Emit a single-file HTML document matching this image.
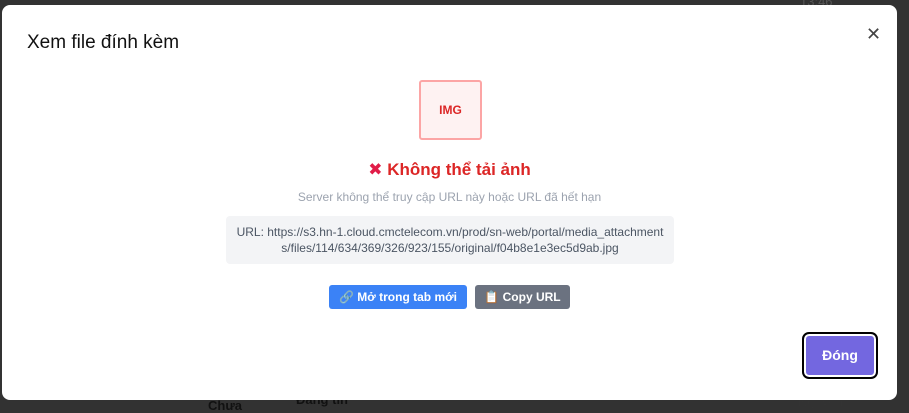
<!DOCTYPE html>
<html><head><meta charset="utf-8"><style>
html,body{margin:0;padding:0;width:909px;height:410px;overflow:hidden;background:#323232;font-family:"Liberation Sans","DejaVu Sans",sans-serif;}
.bgtxt{position:absolute;color:#111;font-size:13px;}
.modal{position:absolute;left:2px;top:5px;width:895px;height:395px;background:#fff;border-radius:8px;}
.title{position:absolute;left:25px;top:27px;font-size:19px;color:#111;}
.close{position:absolute;left:864px;top:19px;font-size:18px;color:#444;font-weight:200;}
.img{position:absolute;left:417px;top:75px;width:59px;height:56px;border:2px solid #fca5a5;background:#fef2f2;border-radius:3px;color:#dc2626;font-size:12px;font-weight:bold;text-align:center;line-height:56px;}
.err{position:absolute;left:0;width:895px;top:155px;text-align:center;color:#dc2626;font-size:17px;font-weight:bold;}
.err span{color:#e11d48;}
.sub{position:absolute;left:0;width:895px;top:185px;text-align:center;color:#9ca3af;font-size:12px;}
.url{position:absolute;left:224px;top:211px;width:448px;height:48px;background:#f3f4f6;border-radius:4px;color:#4b5563;font-size:12px;line-height:16px;text-align:center;padding-top:8px;box-sizing:border-box;}
.btn{position:absolute;top:280px;height:24px;line-height:24px;color:#fff;font-size:12px;font-weight:bold;border-radius:3px;text-align:center;}
.b1{left:327px;width:138px;background:#3b82f6;}
.b2{left:473px;width:95px;background:#6b7280;}
.dong{position:absolute;left:800px;top:327px;width:76px;height:47px;box-sizing:border-box;border:2px solid #000;border-radius:7px;background:#7367e0;box-shadow:inset 0 0 0 2px #fff;color:#fff;font-weight:bold;font-size:14px;text-align:center;line-height:43px;}
</style></head><body>
<div class="bgtxt" style="left:800px;top:-6px;color:#555">13:46</div>
<div class="bgtxt" style="left:208px;top:398px;font-weight:bold">Chưa</div>
<div class="bgtxt" style="left:296px;top:392px;font-weight:bold">Đăng tin</div>
<div class="bgtxt" style="left:798px;top:394px;color:#333">Nguyễn</div>
<div class="modal">
<div class="title">Xem file đính kèm</div>
<div class="close">✕</div>
<div class="img">IMG</div>
<div class="err"><span>✖</span> Không thể tải ảnh</div>
<div class="sub">Server không thể truy cập URL này hoặc URL đã hết hạn</div>
<div class="url">URL: https://s3.hn-1.cloud.cmctelecom.vn/prod/sn-web/portal/media_attachment<br>s/files/114/634/369/326/923/155/original/f04b8e1e3ec5d9ab.jpg</div>
<div class="btn b1">🔗 Mở trong tab mới</div>
<div class="btn b2">📋 Copy URL</div>
<div class="dong">Đóng</div>
</div>
</body></html>
